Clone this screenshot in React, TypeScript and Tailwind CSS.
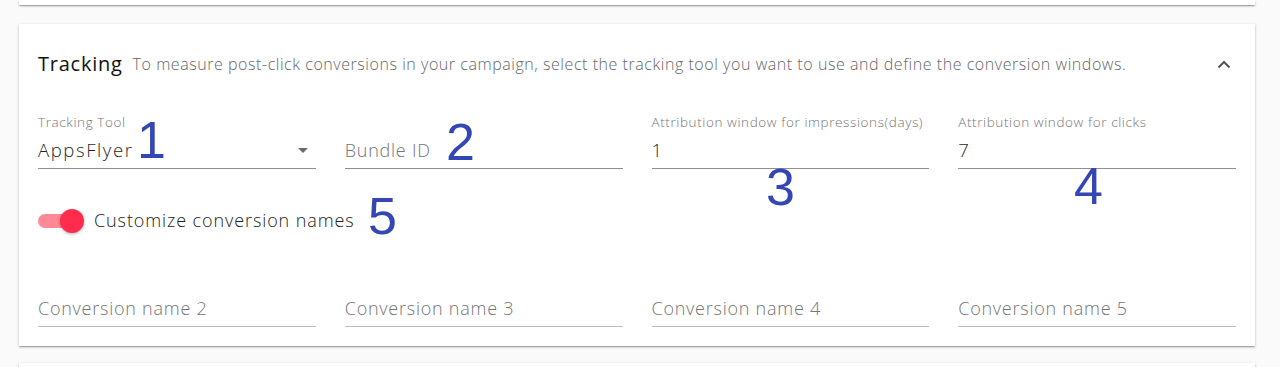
import type { ReactNode } from "react";

const font = { fontFamily: '"Open Sans", "Noto Sans", sans-serif' };

function Field({ label, value, placeholder, select, light }: { label?: string; value?: string; placeholder?: string; select?: boolean; light?: boolean }) {
  return (
    <div className="flex flex-col">
      <div className="h-4 text-[13.5px] leading-4 font-light tracking-[0.6px] text-[#757575]">{label}</div>
      <div
        className={`mt-1 flex h-[35px] items-center justify-between border-b pb-[2px] ${light ? "border-[#bdbdbd]" : "border-[#8f8f8f]"}`}
      >
        {value ? (
          <span className="text-[18.5px] font-light tracking-[1.6px] text-[#1f1f1f]">{value}</span>
        ) : (
          <span className="text-[18px] font-light tracking-[0.75px] text-[#757575]">{placeholder}</span>
        )}
        {select && (
          <svg width="10" height="5" viewBox="0 0 10 5" className="mr-[8px]">
            <path d="M0 0h10L5 5z" fill="#6b6b6b" />
          </svg>
        )}
      </div>
    </div>
  );
}

function Mark({ children, className }: { children: ReactNode; className: string }) {
  return (
    <span
      className={`absolute text-[52px] leading-none text-[#3346b4] ${className}`}
      style={{ fontFamily: '"Liberation Sans", Arial, sans-serif' }}
    >
      {children}
    </span>
  );
}

const paper = "bg-white shadow-[0_1px_3px_rgba(0,0,0,0.2),0_1px_1px_rgba(0,0,0,0.14),0_2px_1px_-1px_rgba(0,0,0,0.12)]";

export default function App() {
  return (
    <div className="min-h-[367px] overflow-hidden bg-[#fafafa] pl-[19px] pr-[25px]" style={font}>
      <div className={`h-[5px] ${paper}`} />

      <section className={`relative mt-[19px] h-[322px] px-[19px] ${paper}`}>
        <header className="flex h-[78px] items-center pt-[2px]">
          <h2 className="text-[20px] font-medium tracking-[0.75px] text-[#111]">Tracking</h2>
          <p className="ml-[10px] flex-1 text-[16px] font-light tracking-[0.55px] text-[#666]">
            To measure post-click conversions in your campaign, select the tracking tool you want to use and define the conversion windows.
          </p>
          <svg width="14" height="9" viewBox="0 0 14 9" className="mr-[5px]">
            <path d="M1.5 7.5L7 2l5.5 5.5" fill="none" stroke="#555" strokeWidth="2" />
          </svg>
        </header>

        <div className="mt-[12px] grid grid-cols-4 gap-x-[29px]">
          <Field label="Tracking Tool" value="AppsFlyer" select />
          <Field placeholder="Bundle ID" />
          <Field label="Attribution window for impressions(days)" value="1" />
          <Field label="Attribution window for clicks" value="7" />
        </div>

        <div className="mt-[38px] flex items-center">
          <div className="relative h-[24px] w-[46px]">
            <div className="absolute left-0 top-[5px] h-[14px] w-[42px] rounded-full bg-[#ff8a96]" />
            <div className="absolute right-0 top-0 h-[24px] w-[24px] rounded-full bg-[#ff2d4b] shadow-[0_1px_3px_rgba(0,0,0,0.3)]" />
          </div>
          <span className="ml-[10px] text-[18px] font-light tracking-[0.9px] text-[#222]">Customize conversion names</span>
        </div>

        <div className="mt-[38px] grid grid-cols-4 gap-x-[29px]">
          <Field placeholder="Conversion name 2" light />
          <Field placeholder="Conversion name 3" light />
          <Field placeholder="Conversion name 4" light />
          <Field placeholder="Conversion name 5" light />
        </div>

        <Mark className="left-[118px] top-[90px]">1</Mark>
        <Mark className="left-[427px] top-[92px]">2</Mark>
        <Mark className="left-[747px] top-[137px]">3</Mark>
        <Mark className="left-[1055px] top-[136px]">4</Mark>
        <Mark className="left-[349px] top-[166px]">5</Mark>
      </section>

      <div className={`mt-[17px] h-[20px] ${paper}`} />
    </div>
  );
}
